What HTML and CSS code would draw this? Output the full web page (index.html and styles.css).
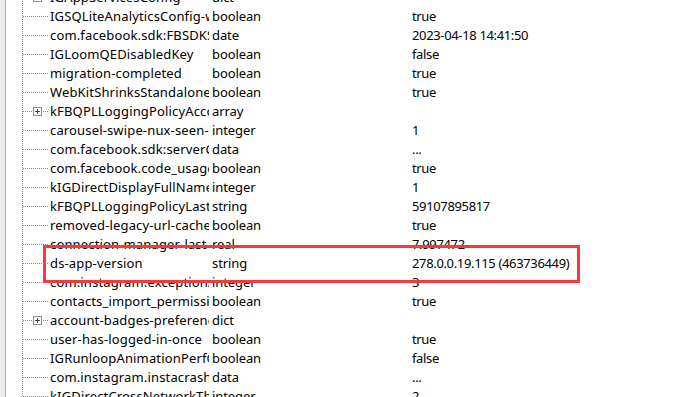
FILE: index.html
```html
<!DOCTYPE html>
<html>
<head>
<meta charset="utf-8">
<link rel="stylesheet" href="styles.css">
</head>
<body>
<div class="view">
  <div class="gutter"></div>
  <div class="tree">
    <div class="rows">
      <div class="row"><span class="branch"><span class="toggle"><svg width="9" height="9" viewBox="0 0 9 9"><rect x="0.5" y="0.5" width="8" height="8" fill="#fff" stroke="#919191"/><path d="M2 4.5h5M4.5 2v5" stroke="#3a4a6a"/></svg></span></span><span class="name">IGAppServicesConfig</span><span class="type">dict</span><span class="value"></span></div>
      <div class="row"><span class="branch"></span><span class="name">IGSQLiteAnalyticsConfig-wal-enabled</span><span class="type">boolean</span><span class="value">true</span></div>
      <div class="row"><span class="branch"></span><span class="name">com.facebook.sdk:FBSDKSettingsInstallTimestamp</span><span class="type">date</span><span class="value">2023-04-18 14:41:50</span></div>
      <div class="row"><span class="branch"></span><span class="name">IGLoomQEDisabledKey</span><span class="type">boolean</span><span class="value">false</span></div>
      <div class="row"><span class="branch"></span><span class="name">migration-completed</span><span class="type">boolean</span><span class="value">true</span></div>
      <div class="row"><span class="branch"></span><span class="name">WebKitShrinksStandaloneImagesToFit</span><span class="type">boolean</span><span class="value">true</span></div>
      <div class="row"><span class="branch"><span class="toggle"><svg width="9" height="9" viewBox="0 0 9 9"><rect x="0.5" y="0.5" width="8" height="8" fill="#fff" stroke="#919191"/><path d="M2 4.5h5M4.5 2v5" stroke="#3a4a6a"/></svg></span></span><span class="name">kFBQPLLoggingPolicyAccountConfig</span><span class="type">array</span><span class="value"></span></div>
      <div class="row"><span class="branch"></span><span class="name">carousel-swipe-nux-seen-count</span><span class="type">integer</span><span class="value">1</span></div>
      <div class="row"><span class="branch"></span><span class="name">com.facebook.sdk:serverConfiguration</span><span class="type">data</span><span class="value">...</span></div>
      <div class="row"><span class="branch"></span><span class="name">com.facebook.code_usage_logger</span><span class="type">boolean</span><span class="value">true</span></div>
      <div class="row"><span class="branch"></span><span class="name">kIGDirectDisplayFullNameToggle</span><span class="type">integer</span><span class="value">1</span></div>
      <div class="row"><span class="branch"></span><span class="name">kFBQPLLoggingPolicyLastKnownVersion</span><span class="type">string</span><span class="value">59107895817</span></div>
      <div class="row"><span class="branch"></span><span class="name">removed-legacy-url-caches</span><span class="type">boolean</span><span class="value">true</span></div>
      <div class="row"><span class="branch"></span><span class="name">connection-manager-last-launch</span><span class="type">real</span><span class="value">7.997472</span></div>
      <div class="row"><span class="branch"></span><span class="name">ds-app-version</span><span class="type">string</span><span class="value">278.0.0.19.115 (463736449)</span></div>
      <div class="row"><span class="branch"></span><span class="name">com.instagram.exceptionApiCount</span><span class="type">integer</span><span class="value">3</span></div>
      <div class="row"><span class="branch"></span><span class="name">contacts_import_permission_shown</span><span class="type">boolean</span><span class="value">true</span></div>
      <div class="row"><span class="branch"><span class="toggle"><svg width="9" height="9" viewBox="0 0 9 9"><rect x="0.5" y="0.5" width="8" height="8" fill="#fff" stroke="#919191"/><path d="M2 4.5h5M4.5 2v5" stroke="#3a4a6a"/></svg></span></span><span class="name">account-badges-preferences</span><span class="type">dict</span><span class="value"></span></div>
      <div class="row"><span class="branch"></span><span class="name">user-has-logged-in-once</span><span class="type">boolean</span><span class="value">true</span></div>
      <div class="row"><span class="branch"></span><span class="name">IGRunloopAnimationPerfQEEnabled</span><span class="type">boolean</span><span class="value">false</span></div>
      <div class="row"><span class="branch"></span><span class="name">com.instagram.instacrashHandler</span><span class="type">data</span><span class="value">...</span></div>
      <div class="row"><span class="branch"></span><span class="name">kIGDirectCrossNetworkThreadsCount</span><span class="type">integer</span><span class="value">2</span></div>
    </div>
  </div>
  <div class="highlight"></div>
</div>
</body>
</html>
```
FILE: styles.css
```css
html, body {
  margin: 0;
  padding: 0;
  background: #fff;
}
body {
  font-family: "Noto Sans", "Noto Sans CJK SC", sans-serif;
  font-size: 13px;
  color: #000;
}
.view {
  position: relative;
  display: flex;
  width: 684px;
  height: 397px;
  overflow: hidden;
}
.gutter {
  width: 5px;
  flex: none;
  background: #ececec;
  border-right: 1px solid #a9a9a9;
}
.tree {
  flex: 1;
  padding-left: 16px;
}
.rows {
  margin-top: -12px;
  border-left: 1px dotted #8c8c8c;
  min-height: 430px;
}
.row {
  display: grid;
  grid-template-columns: 27px 162px 200px 1fr;
  height: 19px;
  line-height: 19px;
  white-space: nowrap;
}
.branch {
  position: relative;
}
.branch::before {
  content: "";
  position: absolute;
  left: 0;
  right: 2px;
  top: 9px;
  border-top: 1px dotted #8c8c8c;
}
.toggle {
  position: absolute;
  left: 10px;
  top: 5px;
  width: 9px;
  height: 9px;
  background: #fff;
  line-height: 0;
}
.name {
  overflow: hidden;
  margin-right: 3px;
  letter-spacing: 0.15px;
}
.type {
  overflow: hidden;
  letter-spacing: -0.1px;
}
.value {
  overflow: hidden;
  letter-spacing: -0.35px;
}
.highlight {
  position: absolute;
  left: 43px;
  top: 245px;
  width: 531px;
  height: 32px;
  border: 3px solid #f33a3c;
}
```
